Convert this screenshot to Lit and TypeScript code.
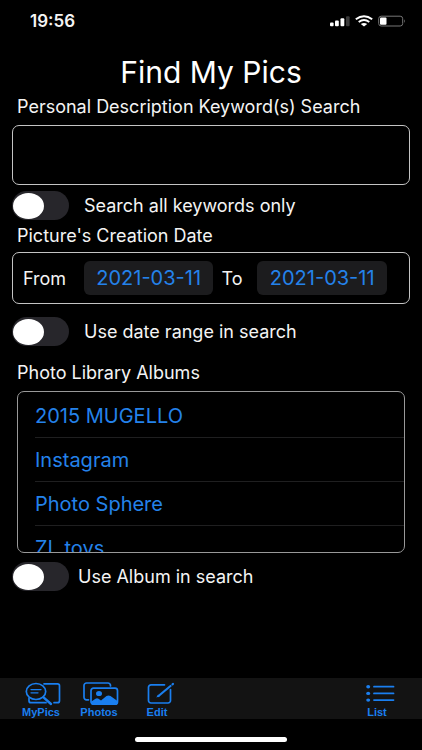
import { LitElement, html, svg, css } from "lit";
import { customElement, property, state } from "lit/decorators.js";

@customElement("toggle-row")
class ToggleRow extends LitElement {
  @property() label = "";

  static styles = css`
    :host {
      display: block;
    }
    .row {
      display: flex;
      align-items: center;
      gap: var(--toggle-gap, 15px);
      font-size: 18px;
      line-height: 29px;
    }
    .switch {
      appearance: none;
      box-sizing: border-box;
      flex: none;
      display: flex;
      align-items: center;
      width: 57px;
      height: 29px;
      margin: 0;
      padding: 0 1px;
      border-radius: 15px;
      background: #27262b;
      cursor: pointer;
    }
    .switch::before {
      content: "";
      width: 31px;
      height: 26px;
      border-radius: 50%;
      background: #fff;
    }
    .switch:checked {
      justify-content: flex-end;
      background: #30d158;
    }
  `;

  render() {
    return html`<label class="row">
      <input class="switch" type="checkbox" role="switch" />
      <span>${this.label}</span>
    </label>`;
  }
}

const icons: Record<string, { box: string; art: unknown }> = {
  MyPics: {
    box: "-4 0 40 24",
    art: svg`
      <path d="M19 1.800h13.500a2 2 0 0 1 2 2v14.900a2 2 0 0 1-2 2h-3.500M21 20.700H6a2 2 0 0 1-2-2v-2.500"/>
      <ellipse cx="11" cy="9.500" rx="9.700" ry="8"/>
      <path d="M6 7.600h10M6 10.800h7" stroke-width="1.300"/>
      <path d="M18.500 15.300l7.500 6.700" stroke-width="2.400"/>`,
  },
  Photos: {
    box: "-4 0 40 24",
    art: svg`
      <path d="M5.500 17.800H3.500a2.500 2.500 0 0 1-2.500-2.500V3.500A2.500 2.500 0 0 1 3.500 1h21.500a2.500 2.500 0 0 1 2.500 2.500V4"/>
      <rect x="8" y="6.200" width="26.500" height="16" rx="2.500"/>
      <ellipse cx="16" cy="11.500" rx="3" ry="2.600" fill="currentColor" stroke="none"/>
      <path d="M8 19.800l4.500-3q1.500-1 3 0l2.500 1.600 5.500-4.300q2-1.300 4 0l7 4.900v2a2 2 0 0 1-2 2H10a2 2 0 0 1-2-2z" fill="currentColor" stroke="none"/>`,
  },
  Edit: {
    box: "-10 0 40 24",
    art: svg`
      <path d="M17.500 2.800H4a2.500 2.500 0 0 0-2.500 2.500V18.500A2.500 2.500 0 0 0 4 21h17a2.500 2.500 0 0 0 2.500-2.500V7.500"/>
      <path d="M11.500 14L23.500 4" stroke-width="2.200"/>
      <path d="M9.300 15.600l1.800-3 1.800 1.700z" fill="currentColor" stroke="none"/>
      <path d="M25.500 2.300l.5-.4" stroke-width="2.200"/>`,
  },
  List: {
    box: "-9 0 40 24",
    art: svg`
      <path d="M8 4.700h19.500M8 11.400h19.500M8 18.100h19.500" stroke-width="1.800"/>
      <g fill="currentColor" stroke="none">
        <ellipse cx="2.200" cy="4.700" rx="2" ry="1.700"/>
        <ellipse cx="2.200" cy="11.400" rx="2" ry="1.700"/>
        <ellipse cx="2.200" cy="18.100" rx="2" ry="1.700"/>
      </g>`,
  },
};

@customElement("tab-button")
class TabButton extends LitElement {
  @property() name = "";

  static styles = css`
    .tab {
      display: flex;
      flex-direction: column;
      align-items: center;
      width: 40px;
      margin: 0;
      padding: 0;
      border: 0;
      background: none;
      color: #1a7ff0;
      font: bold 11px/13px "Liberation Sans", Arial, sans-serif;
      cursor: pointer;
    }
    .icon {
      display: block;
      width: 40px;
      height: 24px;
      fill: none;
      stroke: currentColor;
      stroke-width: 1.7;
      stroke-linecap: round;
      stroke-linejoin: round;
    }
  `;

  render() {
    const icon = icons[this.name];
    return html`<button class="tab" type="button">
      <svg class="icon" viewBox=${icon.box} aria-hidden="true">${icon.art}</svg>
      ${this.name}
    </button>`;
  }
}

@customElement("app-root")
class AppRoot extends LitElement {
  @state() albums = ["2015 MUGELLO", "Instagram", "Photo Sphere", "ZL toys"];

  static styles = css`
    :host {
      display: flex;
      flex-direction: column;
      min-height: 100vh;
      background: #000;
      color: #f4f4f4;
      font-family: Inter, "Liberation Sans", sans-serif;
      font-size: 18px;
    }
    .status {
      display: flex;
      justify-content: space-between;
      align-items: center;
      height: 42px;
      padding: 0 16px 0 30px;
      font-size: 17px;
      font-weight: 600;
    }
    .title {
      margin: 12px 0 0;
      font-size: 30px;
      font-weight: 400;
      line-height: 36px;
      text-align: center;
      color: #fff;
    }
    .form {
      flex: 1;
      display: flex;
      flex-direction: column;
      padding: 7px 12px 24px;
    }
    .caption {
      padding-left: 5px;
      line-height: 20px;
    }
    .keywords {
      box-sizing: border-box;
      width: 100%;
      height: 60px;
      margin: 8px 0 6px;
      padding: 0 12px;
      border: 1px solid #c4c4c4;
      border-radius: 7px;
      background: transparent;
      color: #fff;
      font: inherit;
    }
    .date-caption {
      margin-top: 6px;
    }
    .dates {
      display: flex;
      align-items: center;
      box-sizing: border-box;
      height: 52px;
      margin: 6px 0 13px;
      padding: 0 22px 0 10px;
      border: 1px solid #c4c4c4;
      border-radius: 7px;
    }
    .from {
      flex: 61;
    }
    .to {
      flex: 36;
      padding-left: 8px;
    }
    .date {
      box-sizing: border-box;
      flex: 130;
      min-width: 0;
      height: 34px;
      padding: 0;
      border: 0;
      border-radius: 6px;
      background: #1c1c1e;
      color: #2482ea;
      font: inherit;
      font-size: 20px;
      text-align: center;
    }
    .albums-caption {
      margin-top: 17px;
    }
    .albums {
      box-sizing: border-box;
      height: 162px;
      margin: 8px 5px 9px;
      padding: 2px 0 0 17px;
      overflow-y: auto;
      scrollbar-width: none;
      list-style: none;
      border: 1px solid #999;
      border-radius: 7px;
    }
    .album {
      box-sizing: border-box;
      display: block;
      width: 100%;
      height: 44px;
      padding: 0;
      border: 0;
      border-bottom: 1px solid #1f1f20;
      background: none;
      color: #2482ea;
      font: inherit;
      font-size: 20px;
      text-align: left;
      cursor: pointer;
    }
    .album-toggle {
      --toggle-gap: 9px;
    }
    .tabs {
      display: flex;
      align-items: flex-start;
      gap: 18px;
      height: 37px;
      padding: 4px 25px 0 21px;
      background: #131313;
    }
    .last {
      margin-left: auto;
    }
    .home {
      align-self: center;
      width: 36%;
      height: 5px;
      margin: 18px 0 8px;
      border-radius: 3px;
      background: #fff;
    }
  `;

  render() {
    return html`
      <header class="status">
        <time>19:56</time>
        <svg width="76" height="14" viewBox="0 0 76 14" fill="#fff" role="img" aria-label="Signal, Wi-Fi and battery">
          <rect x="0" y="8.500" width="3.600" height="3.800" rx="1" />
          <rect x="5" y="6.500" width="3.800" height="5.800" rx="1" />
          <rect x="10.500" y="4.300" width="3.800" height="8" rx="1" />
          <rect x="16" y="2.300" width="3.600" height="10" rx="1" fill="#3b3b3b" />
          <g fill="none" stroke="#fff" stroke-width="2">
            <path d="M25.800 5.300q8.200-6 16.400 0" />
            <path d="M28.700 8q5.300-3.800 10.600 0" />
          </g>
          <path d="M30.800 10q3.200-2.200 6.400 0L34 12.600z" />
          <rect x="48.700" y="2.200" width="24" height="9.800" rx="2.500" fill="none" stroke="#777" />
          <rect x="50" y="3.500" width="6.500" height="7.300" rx="1" />
          <path d="M74 5.300q1.800 1.800 0 3.600z" fill="#777" />
        </svg>
      </header>
      <h1 class="title">Find My Pics</h1>
      <main class="form">
        <label class="caption" for="keywords">Personal Description Keyword(s) Search</label>
        <input class="keywords" id="keywords" type="text" />
        <toggle-row label="Search all keywords only"></toggle-row>
        <div class="caption date-caption">Picture's Creation Date</div>
        <div class="dates">
          <label class="from" for="from">From</label>
          <input class="date" id="from" type="text" value="2021-03-11" />
          <label class="to" for="to">To</label>
          <input class="date" id="to" type="text" value="2021-03-11" />
        </div>
        <toggle-row label="Use date range in search"></toggle-row>
        <div class="caption albums-caption">Photo Library Albums</div>
        <ul class="albums">
          ${this.albums.map(
            (name) => html`<li><button class="album" type="button">${name}</button></li>`
          )}
        </ul>
        <toggle-row class="album-toggle" label="Use Album in search"></toggle-row>
      </main>
      <nav class="tabs">
        <tab-button name="MyPics"></tab-button>
        <tab-button name="Photos"></tab-button>
        <tab-button name="Edit"></tab-button>
        <tab-button class="last" name="List"></tab-button>
      </nav>
      <div class="home"></div>
    `;
  }
}
